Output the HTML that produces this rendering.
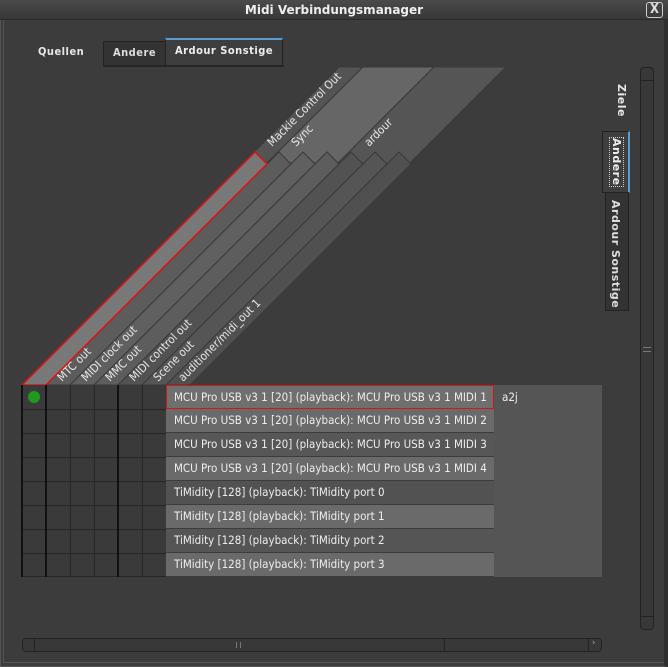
<!DOCTYPE html>
<html><head><meta charset="utf-8"><style>
html,body{margin:0;padding:0;width:668px;height:667px;overflow:hidden;background:#3c3c3c;font-family:"DejaVu Sans Condensed","DejaVu Sans","Liberation Sans",sans-serif;}
.abs{position:absolute;box-sizing:border-box;}
.title{left:0;top:0;width:668px;height:20px;background:linear-gradient(#4b4b4b,#383838);border-bottom:1px solid #2a2a2a;color:#eee;font-weight:bold;font-size:12px;text-align:center;line-height:20px;font-family:"DejaVu Sans",sans-serif;}
.close{left:646px;top:2px;width:17px;height:16px;border:1px solid #ccc;border-radius:3px;color:#ddd;font-size:13px;line-height:14px;text-align:center;font-weight:bold;}
.row{left:166px;width:328px;height:24px;font-size:11.5px;color:#eee;line-height:22px;padding-left:8px;border-bottom:1px solid #3c3c3c;white-space:nowrap;overflow:hidden;}
</style></head><body>
<div class="abs" style="left:0;top:20px;width:668px;height:647px;border:1px solid #555;border-top:none;border-right:4px solid #2e2e2e;"></div>
<div class="abs" style="left:3px;top:20px;width:1px;height:643px;background:#555"></div>
<div class="abs" style="left:3px;top:662px;width:661px;height:1px;background:#555"></div>
<div class="abs title">Midi Verbindungsmanager</div>
<div class="abs close">X</div>

<div class="abs" style="left:38px;top:45px;font-size:11px;font-weight:bold;color:#e8e8e8;letter-spacing:0.5px">Quellen</div>
<div class="abs" style="left:103px;top:41px;width:63px;height:25px;background:#333;border:1px solid #222;color:#ddd;font-size:11px;font-weight:bold;line-height:22px;text-align:center;letter-spacing:0.5px">Andere</div>
<div class="abs" style="left:165px;top:38px;width:118px;height:28px;background:#3e3e3e;border:1px solid #222;border-top:2px solid #5a9ccc;color:#eee;font-size:11px;font-weight:bold;line-height:22px;text-align:center;letter-spacing:0.5px">Ardour Sonstige</div>
<div class="abs" style="left:103px;top:65px;width:181px;height:2px;background:#262626"></div>

<svg class="abs" style="left:0;top:0" width="668" height="667">
<g stroke="#3a3a3a" stroke-width="1">
<polygon points="339,67 363,67 267,163 243,163" fill="#545454"/>
<polygon points="363,67 434,67 338,163 267,163" fill="#666666"/>
<polygon points="434,67 506,67 410,163 338,163" fill="#555555"/>
<polygon points="46,385 279,152 291,164 70,385" fill="#5c5c5c"/>
<polygon points="70,385 303,152 315,164 94,385" fill="#606060"/>
<polygon points="94,385 327,152 339,164 118,385" fill="#5d5d5d"/>
<polygon points="118,385 351,152 363,164 142,385" fill="#525252"/>
<polygon points="142,385 375,152 387,164 166,385" fill="#555555"/>
<polygon points="166,385 399,152 411,164 190,385" fill="#505050"/>
</g>
<polygon points="22,385 255,152 267,164 46,385" fill="#787878" stroke="#e01010" stroke-width="1.5"/>
<g fill="#e8e8e8" font-size="11.5" font-family="DejaVu Sans Condensed, DejaVu Sans, sans-serif">
<text transform="translate(62,382) rotate(-45)">MTC out</text>
<text transform="translate(86,382) rotate(-45)">MIDI clock out</text>
<text transform="translate(110,382) rotate(-45)">MMC out</text>
<text transform="translate(134,382) rotate(-45)">MIDI control out</text>
<text transform="translate(158,382) rotate(-45)">Scene out</text>
<text transform="translate(183,382) rotate(-45)">auditioner/midi_out 1</text>
<text transform="translate(272,147) rotate(-45)">Mackie Control Out</text>
<text transform="translate(296,147) rotate(-45)">Sync</text>
<text transform="translate(369,147) rotate(-45)">ardour</text>
</g>
<rect x="22" y="385" width="144" height="192" fill="#3a3a3a"/>
<g stroke="#262626" stroke-width="1">
<line x1="22" y1="409.5" x2="166" y2="409.5"/><line x1="22" y1="433.5" x2="166" y2="433.5"/>
<line x1="22" y1="457.5" x2="166" y2="457.5"/><line x1="22" y1="481.5" x2="166" y2="481.5"/>
<line x1="22" y1="505.5" x2="166" y2="505.5"/><line x1="22" y1="529.5" x2="166" y2="529.5"/>
<line x1="22" y1="553.5" x2="166" y2="553.5"/><line x1="22" y1="576.5" x2="166" y2="576.5"/>
<line x1="70.5" y1="385" x2="70.5" y2="577"/><line x1="94.5" y1="385" x2="94.5" y2="577"/>
<line x1="142.5" y1="385" x2="142.5" y2="577"/>
</g>
<g stroke="#111" stroke-width="2">
<line x1="22" y1="385" x2="22" y2="577"/><line x1="46" y1="385" x2="46" y2="577"/><line x1="118" y1="385" x2="118" y2="577"/>
</g>
<circle cx="34" cy="397" r="6" fill="#1f9a1f"/>
</svg>

<div class="abs row" style="top:385px;background:#6f6f6f;border:1px solid #d01818;padding-left:7px">MCU Pro USB v3 1 [20] (playback): MCU Pro USB v3 1 MIDI 1</div>
<div class="abs row" style="top:409px;background:#6a6a6a">MCU Pro USB v3 1 [20] (playback): MCU Pro USB v3 1 MIDI 2</div>
<div class="abs row" style="top:433px;background:#575757">MCU Pro USB v3 1 [20] (playback): MCU Pro USB v3 1 MIDI 3</div>
<div class="abs row" style="top:457px;background:#6a6a6a">MCU Pro USB v3 1 [20] (playback): MCU Pro USB v3 1 MIDI 4</div>
<div class="abs row" style="top:481px;background:#525252">TiMidity [128] (playback): TiMidity port 0</div>
<div class="abs row" style="top:505px;background:#6a6a6a">TiMidity [128] (playback): TiMidity port 1</div>
<div class="abs row" style="top:529px;background:#555555">TiMidity [128] (playback): TiMidity port 2</div>
<div class="abs row" style="top:553px;background:#6a6a6a">TiMidity [128] (playback): TiMidity port 3</div>
<div class="abs" style="left:494px;top:385px;width:108px;height:192px;background:#555;color:#eee;font-size:11.5px;padding:5px 0 0 8px;">a2j</div>

<div class="abs" style="left:615px;top:84px;font-size:11px;font-weight:bold;color:#e8e8e8;writing-mode:vertical-rl;letter-spacing:0.5px;font-family:'DejaVu Sans',sans-serif">Ziele</div>
<div class="abs" style="left:602px;top:131px;width:28px;height:62px;background:#3e3e3e;border:1px solid #222;border-right:2px solid #5a9ccc;"></div>
<div class="abs" style="left:610px;top:138px;font-size:11px;font-weight:bold;color:#eee;writing-mode:vertical-rl;outline:1px dotted #ccc;letter-spacing:0.5px;font-family:'DejaVu Sans',sans-serif">Andere</div>
<div class="abs" style="left:605px;top:192px;width:24px;height:119px;background:#333;border:1px solid #222;"></div>
<div class="abs" style="left:609px;top:200px;font-size:11px;font-weight:bold;color:#ddd;writing-mode:vertical-rl;letter-spacing:0.5px;font-family:'DejaVu Sans',sans-serif">Ardour Sonstige</div>

<div class="abs" style="left:640px;top:67px;width:14px;height:563px;background:#383838;border:1px solid #222;border-radius:4px;"></div>
<div class="abs" style="left:641px;top:80px;width:12px;height:1px;background:#222"></div>
<div class="abs" style="left:641px;top:616px;width:12px;height:1px;background:#222"></div>
<div class="abs" style="left:643px;top:347px;width:8px;height:5px;border-top:1px solid #777;border-bottom:1px solid #777"></div>

<div class="abs" style="left:22px;top:638px;width:580px;height:14px;background:#383838;border:1px solid #222;border-radius:4px;"></div>
<div class="abs" style="left:34px;top:639px;width:1px;height:12px;background:#222"></div>
<div class="abs" style="left:444px;top:639px;width:1px;height:12px;background:#222"></div>
<div class="abs" style="left:588px;top:639px;width:1px;height:12px;background:#222"></div>
<div class="abs" style="left:592px;top:638px;color:#aaa;font-size:9px">›</div>
<div class="abs" style="left:236px;top:642px;width:5px;height:6px;border-left:1px solid #777;border-right:1px solid #777"></div>
</body></html>
